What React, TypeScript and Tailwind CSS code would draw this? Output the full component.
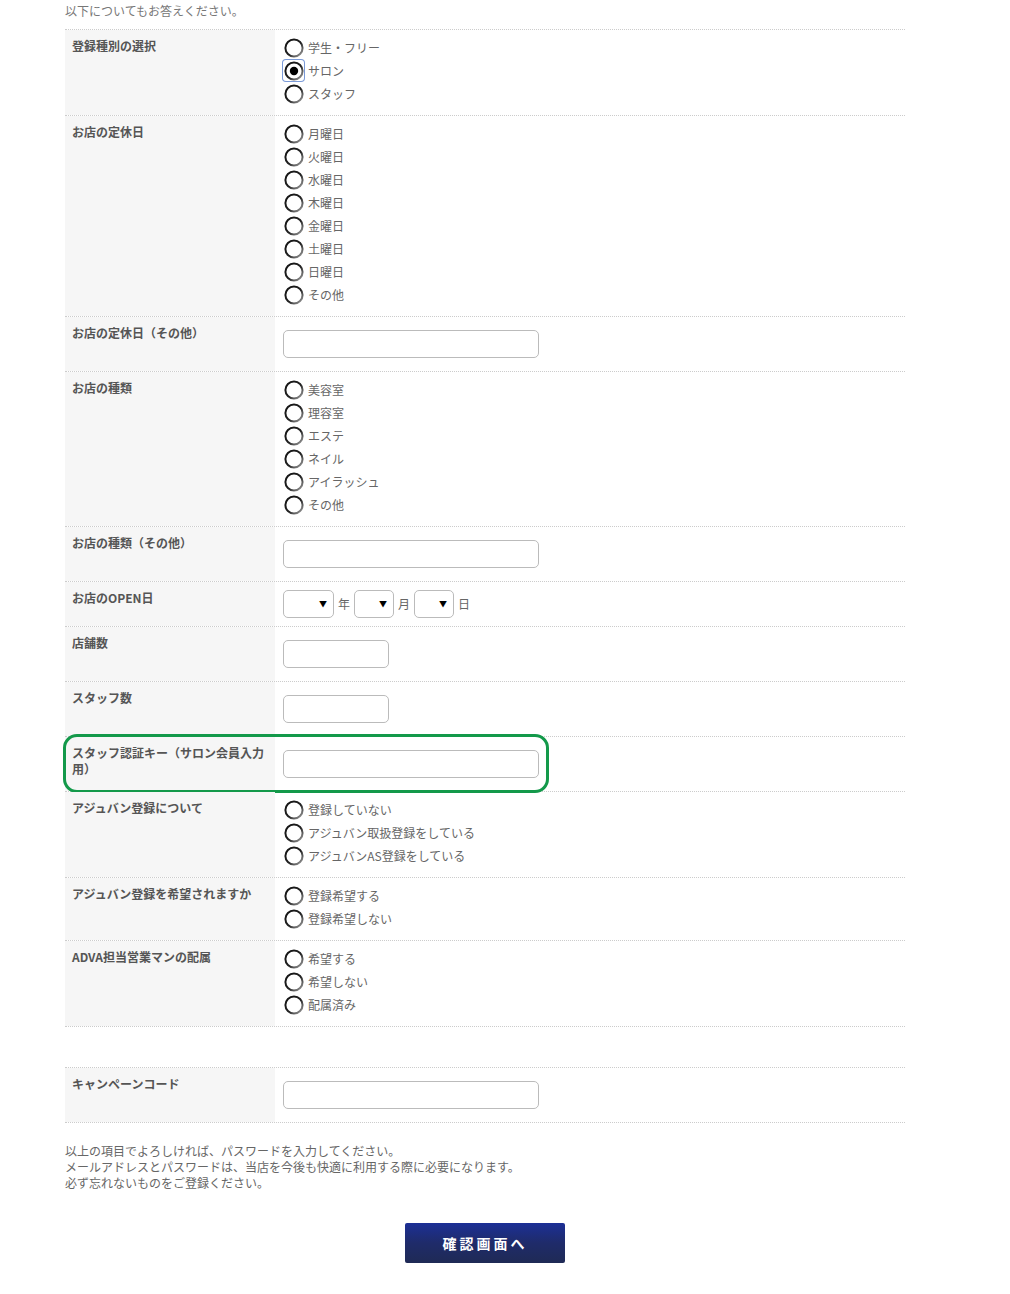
import React from 'react';

const font = { fontFamily: '"Noto Sans CJK JP", "Noto Sans", sans-serif' };

function Radio({ label, checked = false }: { label: string; checked?: boolean }) {
  return (
    <div className="flex h-[23px] items-center gap-[4px]">
      <span className={`flex h-[21px] w-[21px] items-center justify-center ${checked ? 'rounded-[3px] ring-1 ring-[#7a9ad8]' : ''}`}>
        <svg width="20" height="20" viewBox="0 0 20 20">
          <defs>
            <linearGradient id="rg" x1="0" y1="0" x2="1" y2="1">
              <stop offset="0" stopColor="#111" />
              <stop offset="0.55" stopColor="#222" />
              <stop offset="1" stopColor="#aaa" />
            </linearGradient>
          </defs>
          <circle cx="10" cy="10" r="8.6" fill="#fff" stroke="url(#rg)" strokeWidth="2" />
          {checked && <circle cx="10" cy="10" r="4.2" fill="#000" />}
        </svg>
      </span>
      <span className="text-[12px] leading-none text-[#666]">{label}</span>
    </div>
  );
}

function TextBox({ w = 'w-[256px]' }: { w?: string }) {
  return <div className={`h-[28px] ${w} rounded-[5px] border border-[#bbb] bg-white`} />;
}

function Select({ w }: { w: string }) {
  return (
    <div className={`flex h-[28px] ${w} items-center justify-end rounded-[5px] border border-[#bbb] bg-white pr-[6px]`}>
      <span className="text-[8px] leading-none text-black">▼</span>
    </div>
  );
}

function Row({
  label,
  children,
  py = 'pt-[6px] pb-[10px]',
  highlight = false,
}: {
  label: React.ReactNode;
  children: React.ReactNode;
  py?: string;
  highlight?: boolean;
}) {
  return (
    <div className="relative flex border-b border-dotted border-[#ccc]">
      <div className="w-[210px] shrink-0 bg-[#f6f6f6] pl-[7px] pr-[8px] pt-[8px] pb-[8px] text-[12px] font-bold leading-[16px] text-[#555]">
        {label}
      </div>
      <div className={`flex-1 pl-[8px] ${py}`}>{children}</div>
      {highlight && (
        <div className="pointer-events-none absolute left-[-2px] top-[-3px] h-[59px] w-[486px] rounded-[14px] border-[3px] border-[#13994a]" />
      )}
    </div>
  );
}

const inputPy = 'pt-[13px] pb-[13px]';

export default function App() {
  return (
    <div className="min-h-[1294px] bg-white pl-[65px]" style={font}>
      <p className="pt-[3px] text-[12px] leading-[16px] text-[#777]">以下についてもお答えください。</p>
      <div className="mt-[10px] w-[840px] border-t border-dotted border-[#ccc]">
        <Row label="登録種別の選択">
          <Radio label="学生・フリー" />
          <Radio label="サロン" checked />
          <Radio label="スタッフ" />
        </Row>
        <Row label="お店の定休日">
          {['月曜日', '火曜日', '水曜日', '木曜日', '金曜日', '土曜日', '日曜日', 'その他'].map((d) => (
            <Radio key={d} label={d} />
          ))}
        </Row>
        <Row label="お店の定休日（その他）" py={inputPy}>
          <TextBox />
        </Row>
        <Row label="お店の種類">
          {['美容室', '理容室', 'エステ', 'ネイル', 'アイラッシュ', 'その他'].map((d) => (
            <Radio key={d} label={d} />
          ))}
        </Row>
        <Row label="お店の種類（その他）" py={inputPy}>
          <TextBox />
        </Row>
        <Row label="お店のOPEN日" py="pt-[8px] pb-[8px]">
          <div className="flex items-center gap-[4px] text-[12px] text-[#666]">
            <Select w="w-[51px]" />
            <span>年</span>
            <Select w="w-[40px]" />
            <span>月</span>
            <Select w="w-[40px]" />
            <span>日</span>
          </div>
        </Row>
        <Row label="店舗数" py={inputPy}>
          <TextBox w="w-[106px]" />
        </Row>
        <Row label="スタッフ数" py={inputPy}>
          <TextBox w="w-[106px]" />
        </Row>
        <Row label="スタッフ認証キー（サロン会員入力用）" py={inputPy} highlight>
          <TextBox />
        </Row>
        <Row label="アジュバン登録について">
          <Radio label="登録していない" />
          <Radio label="アジュバン取扱登録をしている" />
          <Radio label="アジュバンAS登録をしている" />
        </Row>
        <Row label="アジュバン登録を希望されますか">
          <Radio label="登録希望する" />
          <Radio label="登録希望しない" />
        </Row>
        <Row label="ADVA担当営業マンの配属">
          <Radio label="希望する" />
          <Radio label="希望しない" />
          <Radio label="配属済み" />
        </Row>
        <div className="h-[41px] border-b border-dotted border-[#ccc]" />
        <Row label="キャンペーンコード" py={inputPy}>
          <TextBox />
        </Row>
      </div>
      <div className="mt-[20px] text-[12px] leading-[16px] text-[#666]">
        <p>以上の項目でよろしければ、パスワードを入力してください。</p>
        <p>メールアドレスとパスワードは、当店を今後も快適に利用する際に必要になります。</p>
        <p>必ず忘れないものをご登録ください。</p>
      </div>
      <div className="flex w-[840px] justify-center pt-[32px]">
        <button className="h-[40px] w-[160px] rounded-[2px] bg-gradient-to-b from-[#1c2f96] via-[#1f2b6a] to-[#1f2a55] text-[14px] font-bold tracking-[3px] text-white">
          確認画面へ
        </button>
      </div>
    </div>
  );
}
